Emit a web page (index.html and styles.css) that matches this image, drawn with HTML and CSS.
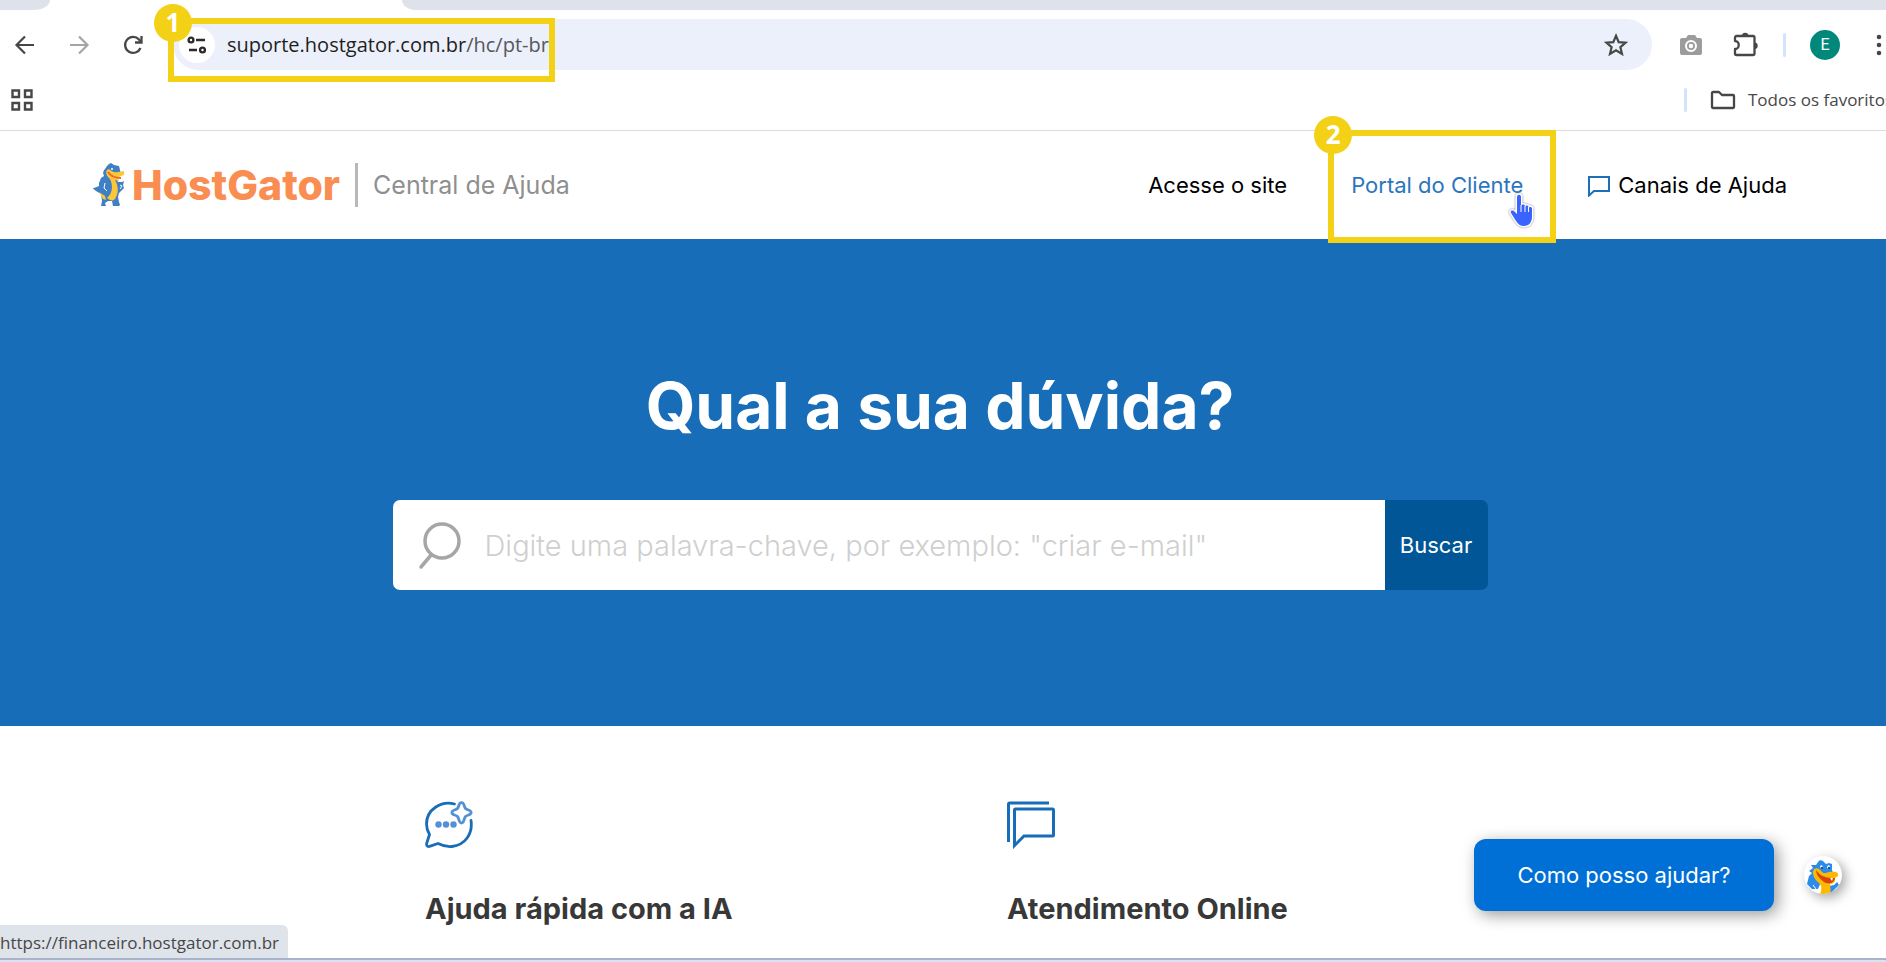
FILE: index.html
```html
<!DOCTYPE html>
<html lang="pt-BR">
<head>
<meta charset="utf-8">
<title>Central de Ajuda HostGator</title>
<meta name="viewport" content="width=device-width, initial-scale=1">
<link rel="stylesheet" href="styles.css">
</head>
<body>
<div class="browser">
  <div class="tabstrip">
    <div class="tab-left"></div>
    <div class="tab-active"></div>
    <div class="tab-rest"></div>
  </div>
  <div class="toolbar">
    <div class="nav-buttons">
      <button class="icon-btn" type="button" aria-label="Voltar">
        <svg width="24" height="24" viewBox="0 0 24 24" fill="none" stroke="#474747" stroke-width="2.2"><path d="M21 12H4M12 3.500 3.500 12l8.500 8.500"/></svg>
      </button>
      <button class="icon-btn" type="button" aria-label="Avançar">
        <svg width="24" height="24" viewBox="0 0 24 24" fill="none" stroke="#a5a5a5" stroke-width="2.200"><path d="M3 12h17M12 3.500l8.500 8.500-8.500 8.500"/></svg>
      </button>
      <button class="icon-btn" type="button" aria-label="Recarregar">
        <svg width="24" height="24" viewBox="0 0 24 24" fill="none" stroke="#474747" stroke-width="2.300"><path d="M19.500 15a8 8 0 1 1-1.500-8.500l2 2.500"/><path d="M20.500 3v6.500H14"/></svg>
      </button>
    </div>
    <div class="omnibox">
      <button class="site-info" type="button" aria-label="Informações do site">
        <svg width="20" height="20" viewBox="0 0 20 20" fill="none" stroke="#2b2b2b" stroke-width="2.400"><circle cx="4" cy="5" r="2.400"/><path d="M9 5h9M2 15h8"/><circle cx="15.500" cy="15" r="2.400"/></svg>
      </button>
      <span class="url"><span>suporte.hostgator.com.br</span><span class="url-path">/hc/pt-br</span></span>
      <button class="icon-btn" type="button" aria-label="Favoritar">
        <svg width="24" height="24" viewBox="0 0 24 24" fill="none" stroke="#474747" stroke-width="2.200"><path d="M12 2.800l2.700 6.300 6.900.6-5.200 4.500 1.600 6.700-6-3.600-6 3.600 1.600-6.700-5.200-4.500 6.900-.6z"/></svg>
      </button>
      <span class="mark mark-url"><span class="mark-num">1</span></span>
    </div>
    <div class="extensions">
      <button class="icon-btn" type="button" aria-label="Captura">
        <svg width="24" height="24" viewBox="0 0 24 24"><path fill="#9c9c9c" d="M3 5h4l2-3h7l2 3h3a2 2 0 0 1 2 2v13a2 2 0 0 1-2 2H3a2 2 0 0 1-2-2V7a2 2 0 0 1 2-2z"/><circle cx="12" cy="13" r="5" fill="none" stroke="#fff" stroke-width="2"/><circle cx="12" cy="13" r="2.200" fill="#fff"/></svg>
      </button>
      <button class="icon-btn" type="button" aria-label="Extensões">
        <svg width="28" height="28" viewBox="0 0 28 28"><path fill="none" stroke="#474747" stroke-width="2.300" stroke-linejoin="round" d="M5 5h17a1.500 1.500 0 0 1 1.500 1.500v16A1.500 1.500 0 0 1 22 24H5.500A1.500 1.500 0 0 1 4 22.500V18c5 0 5-8 0-8V6.500A1.500 1.500 0 0 1 5 5z"/><path fill="#474747" d="M11 5a3.200 3.200 0 0 1 6.400 0zM23.500 11.500a3.200 3.200 0 0 1 0 6.400z"/></svg>
      </button>
      <span class="separator"></span>
      <button class="profile" type="button" aria-label="Perfil">E</button>
      <button class="menu-btn" type="button" aria-label="Menu">
        <svg width="6" height="22" viewBox="0 0 6 22" fill="#474747"><circle cx="3" cy="3" r="2.300"/><circle cx="3" cy="11" r="2.300"/><circle cx="3" cy="19" r="2.300"/></svg>
      </button>
    </div>
  </div>
  <div class="bookmarks">
    <button class="icon-btn" type="button" aria-label="Apps">
      <svg width="22" height="22" viewBox="0 0 22 22" fill="none" stroke="#474747" stroke-width="2.400"><path d="M1.500 1.500h6.500v6.500h-6.500zM14 1.500h6.500v6.500H14zM1.500 14h6.500v6.500h-6.500zM14 14h6.500v6.500H14z"/></svg>
    </button>
    <div class="all-bookmarks">
      <span class="separator"></span>
      <button class="folder" type="button">
        <svg width="26" height="20" viewBox="0 0 26 20" fill="none" stroke="#474747" stroke-width="2.300" stroke-linejoin="round"><path d="M3 2h6l3 3h11a1 1 0 0 1 1 1v11a1 1 0 0 1-1 1H3a1 1 0 0 1-1-1V3a1 1 0 0 1 1-1z"/></svg>
        <span>Todos os favoritos</span>
      </button>
    </div>
  </div>
</div>

<div class="page">
  <header class="site-header">
    <a class="brand" href="#">
      <svg class="brand-gator" width="32" height="44" viewBox="0 0 32 44">
        <path fill="#3f7fc6" d="M14 3l2-2 2-1 3 2 5 1 1 4 1 4-6 2 3 6h4l2-1-1 4 1 3-5 5-1 4 1 5 1 3-1 1h-6l-1-5h-4l-3 2 1 3h-5l1-5-1-7-5-3-5-4 3 1 5-2v-3l2-5 3-2-1-3 1-3 1-1z"/>
        <path fill="#fbc638" d="M14 7l2-1c2 2 5 4 9 3l6-1v4l-6 2 1 4-4-1c3 5 4 12 1 17-1 3-3 4-6 3l-3-2c6-5 6-13 3-19-3-3-5-6-3-9z"/>
        <path fill="none" stroke="#ef6a2c" stroke-width="2" d="M15 9c3 5 7 6 13 6"/>
        <circle cx="19" cy="6" r="1" fill="#fff"/>
        <path fill="#fbc638" d="M6 29l6 4 1 4-3-1z"/>
        <path fill="none" stroke="#fff" stroke-width="1" d="M12 20l-1 5 3 3M27 22l2 1-2 3"/>
      </svg>
      <span class="brand-name">HostGator</span>
      <span class="brand-sep"></span>
      <span class="brand-sub">Central de Ajuda</span>
    </a>
    <nav class="site-nav">
      <a href="#">Acesse o site</a>
      <a class="active" href="#">Portal do Cliente
        <span class="mark mark-link"><span class="mark-num">2</span></span>
        <svg class="cursor" width="28" height="36" viewBox="0 0 28 36"><path fill="#3a62ff" stroke="#fff" stroke-width="3" stroke-linejoin="round" paint-order="stroke" d="M9 4c0-3 4-3 4 0v9c0-2 4-2 4 0v1c0-2 3.500-2 3.500 0v1.500c0-2 3.500-2 3.500 0V24c0 5-3 9-8 9-4 0-6-2-8-5L3 20c-1-2 1-3 3-2l3 3z"/><path stroke="#fff" stroke-width="1" d="M13 12v7M17 13v6M20.500 14v5"/></svg>
      </a>
      <a class="channels" href="#">
        <svg width="24" height="24" viewBox="0 0 24 24" fill="none" stroke="#1d70b8" stroke-width="2"><path d="M2 4h20v14H7l-5 4.500z"/></svg>
        <span>Canais de Ajuda</span>
      </a>
    </nav>
  </header>

  <section class="hero">
    <h1>Qual a sua dúvida?</h1>
    <form class="search" role="search">
      <label class="search-field">
        <svg width="46" height="50" viewBox="0 0 46 50" fill="none" stroke="#a6a6a6" stroke-width="3.500" stroke-linecap="round"><circle cx="26" cy="21" r="17"/><path d="M15.500 34.500 5 47"/></svg>
        <input type="search" aria-label="Buscar artigos" placeholder='Digite uma palavra-chave, por exemplo: "criar e-mail"'>
      </label>
      <button class="search-btn" type="button">Buscar</button>
    </form>
  </section>

  <section class="services">
    <article class="service">
      <svg width="48" height="48" viewBox="0 0 48 48" fill="none" stroke-width="2.800" stroke-linecap="round" stroke-linejoin="round"><path stroke="#176db7" d="M29.500 3C16-.5 1.500 8.500 1.500 23c0 4 1 7 3 10.500L1.800 42c-.6 2.800.5 3.900 2.700 3.400L13 42.500c5 2.500 9 3.500 14 3C40 44 48 33 46 19.500"/><path stroke="#5490d6" d="M34 4c1-3.300 4-3.300 5 0 1 3.500 1.500 4 4.500 5 3.500 1.200 3.500 4 0 5-3 1-3.500 1.500-4.500 5-1 4-4 4-5 0-1-3.500-1.500-4-4.500-5-3.500-1-3.500-3.800 0-5 3-1 3.500-1.500 4.500-5z"/><g fill="#5490d6"><circle cx="13.500" cy="23.500" r="3.200"/><circle cx="21" cy="23.500" r="3.200"/><circle cx="28.500" cy="23.500" r="3.200"/></g></svg>
      <h2>Ajuda rápida com a IA</h2>
    </article>
    <article class="service">
      <svg width="48" height="48" viewBox="0 0 48 48" fill="none" stroke="#176db7" stroke-width="3"><path d="M1.500 41V3a1 1 0 0 1 1-1H42"/><path d="M7.500 44.500V9a1 1 0 0 1 1-1h37a1 1 0 0 1 1 1v25a1 1 0 0 1-1 1H17z"/></svg>
      <h2>Atendimento Online</h2>
    </article>
  </section>
</div>

<div class="chat">
  <button class="chat-btn" type="button">Como posso ajudar?</button>
  <button class="chat-avatar" type="button" aria-label="Abrir chat">
    <svg width="38" height="38" viewBox="0 0 38 38"><path fill="#2b8cec" d="M12 9l2-3 2-2 3 1 3 3 3-1 3 1v6l1 3-9 2-6 14H8l-5-5 2-8 3-3-3-2 4-3-2-3z"/><path fill="#2b8cec" d="M25 30l5-1 3-3 2 3-8 8-3-2z"/><path fill="#fdb900" d="M10 13c4-2 6 1 8 3 4 3 6-1 10 0 4-1 7 1 6 4l-3 2c1 4-2 6-5 6l1 10H16c2-5 2-8-1-11-4-3-8-9-5-14z"/><path fill="#d8440c" d="M12 14c3 5 9 8 16 8h3c-1 5-6 7-11 4-4-3-8-7-8-12z"/><path fill="#fff" d="M26 22h3l-1 3zM16 10l2-1 1 3-2 1zM24 9l2 1-1 3-2-1z"/><circle cx="18" cy="12" r="1" fill="#123"/><circle cx="25" cy="12" r="1" fill="#123"/><path fill="none" stroke="#fff" stroke-width="1" d="M9 29l3 4"/></svg>
  </button>
</div>

<div class="status-bar">https://financeiro.hostgator.com.br</div>
<div class="window-edge"></div>
</body>
</html>
```

FILE: styles.css
```css
* { box-sizing: border-box; }

body {
  margin: 0;
  min-height: 100vh;
  overflow: hidden;
  position: relative;
  background: #fff;
  color: #000;
  font-family: Inter, "Open Sans", sans-serif;
}

button, input { font: inherit; color: inherit; }
button { border: 0; padding: 0; background: none; cursor: pointer; }
a { color: inherit; text-decoration: none; }
svg { display: block; flex: none; }

/* Browser chrome */
.browser {
  font-family: "Open Sans", "Noto Sans", sans-serif;
  border-bottom: 1px solid #dcdcdc;
}

.tabstrip {
  display: flex;
  height: 10px;
  background: #fff;
}
.tab-left {
  width: 50px;
  background: #dee2ea;
  border-bottom-right-radius: 16px 10px;
}
.tab-active { width: 352px; }
.tab-rest {
  flex: 1;
  background: #dee2ea;
  border-bottom-left-radius: 14px 10px;
}

.toolbar {
  display: flex;
  align-items: center;
  height: 69px;
}
.nav-buttons {
  display: flex;
  gap: 30px;
  padding: 0 28px 0 13px;
}
.icon-btn { display: flex; align-items: center; }

.omnibox {
  position: relative;
  flex: 1;
  display: flex;
  align-items: center;
  height: 51px;
  padding: 0 24px 0 6px;
  border-radius: 26px;
  background: #ecf0fa;
}
.site-info {
  display: flex;
  align-items: center;
  justify-content: center;
  width: 36px;
  height: 36px;
  border-radius: 50%;
  background: #fff;
}
.url {
  flex: 1;
  padding-left: 12px;
  font-size: 20px;
  line-height: 28px;
  color: #1f1f1f;
}
.url-path { color: #55585e; }

.extensions {
  display: flex;
  align-items: center;
  padding-left: 27px;
  gap: 24px;
}
.extensions .icon-btn:first-child { margin-right: 4px; }
.separator {
  flex: none;
  width: 3px;
  height: 24px;
  border-radius: 2px;
  background: #d3e3fd;
}
.profile {
  width: 30px;
  height: 30px;
  border-radius: 50%;
  background: #00897b;
  color: #fff;
  font-family: Roboto, sans-serif;
  font-size: 16px;
}
.menu-btn { padding: 0 4px 0 12px; }

.bookmarks {
  display: flex;
  align-items: center;
  justify-content: space-between;
  height: 51px;
  padding: 0 0 10px 11px;
}
.all-bookmarks {
  display: flex;
  align-items: center;
  gap: 23px;
  width: 202px;
  white-space: nowrap;
}
.folder {
  display: flex;
  align-items: center;
  gap: 12px;
  font-size: 17px;
  line-height: 24px;
  color: #474747;
}

/* Numbered callouts */
.mark {
  position: absolute;
  border: 6px solid #f3d117;
  pointer-events: none;
  z-index: 2;
}
.mark-num {
  position: absolute;
  top: -20px;
  left: -20px;
  width: 38px;
  height: 38px;
  border-radius: 50%;
  background: #f3d117;
  color: #fff;
  font: bold 26px/36px "Open Sans", sans-serif;
  text-align: center;
}
.mark-url { left: -5px; top: -1px; width: 387px; height: 64px; }
.mark-link { left: -23px; top: -41px; width: 228px; height: 113px; }

/* Site header */
.site-header {
  display: flex;
  align-items: center;
  justify-content: space-between;
  height: 108px;
  padding: 0 99px 0 93px;
}
.brand { display: flex; align-items: center; }
.brand-name {
  padding-left: 7px;
  font-size: 41px;
  font-weight: 800;
  line-height: 48px;
  color: #f98d52;
}
.brand-sep {
  width: 3px;
  height: 44px;
  margin: 0 15px;
  background: #b8b8b8;
}
.brand-sub {
  font-size: 25px;
  line-height: 32px;
  color: #8f8f8f;
}
.site-nav {
  display: flex;
  align-items: center;
  gap: 64px;
  font-size: 22px;
  line-height: 28px;
}
.site-nav a { position: relative; white-space: nowrap; }
.site-nav .active { color: #2b76bd; }
.site-nav .channels { display: flex; align-items: center; gap: 7px; }
.cursor {
  position: absolute;
  left: 157px;
  top: 22px;
  z-index: 3;
  filter: drop-shadow(0 0 1px #888);
}

/* Hero */
.hero {
  display: flex;
  flex-direction: column;
  align-items: center;
  padding: 131px 6px 136px 0;
  background: #176db7;
}
.hero h1 {
  margin: 0 0 58px;
  font-size: 64px;
  font-weight: 700;
  line-height: 72px;
  color: #fff;
}
.search {
  display: flex;
  width: 100%;
  max-width: 1095px;
  height: 90px;
  border-radius: 7px;
  overflow: hidden;
}
.search-field {
  flex: 1;
  display: flex;
  align-items: center;
  padding-left: 23px;
  background: #fff;
}
.search-field input {
  flex: 1;
  border: 0;
  outline: 0;
  padding: 0 0 0 23px;
  background: none;
  font-size: 29px;
  font-weight: 300;
}
.search-field input::placeholder { color: #cfcfcf; opacity: 1; }
.search-btn {
  width: 103px;
  background: #005696;
  color: #fff;
  font-size: 22px;
}

/* Services */
.services {
  display: grid;
  grid-template-columns: 1fr 1fr;
  width: calc(100% - 6px);
  max-width: 1880px;
  padding: 75px 358px 0;
}
.service { padding-left: 67px; }
.service h2 {
  margin: 42px 0 0;
  font-size: 29px;
  font-weight: 700;
  line-height: 36px;
  color: #383838;
}

/* Floating chat */
.chat {
  position: absolute;
  right: 44px;
  bottom: 51px;
  display: flex;
  align-items: center;
  gap: 30px;
}
.chat-btn {
  width: 300px;
  height: 72px;
  border-radius: 12px;
  background: #0070d6;
  color: #fff;
  font-size: 22px;
  box-shadow: 4px 4px 16px rgba(0, 0, 0, 0.4);
}
.chat-avatar {
  width: 38px;
  height: 38px;
  border-radius: 50%;
  background: #fff;
  overflow: hidden;
  box-shadow: 4px 4px 12px rgba(0, 0, 0, 0.35);
}

/* Window bottom */
.status-bar {
  position: absolute;
  left: 0;
  bottom: 4px;
  width: 288px;
  height: 33px;
  border-top-right-radius: 6px;
  background: #dfe3ea;
  color: #474747;
  font: 17px/35px "Open Sans", "Noto Sans", sans-serif;
}
.window-edge {
  position: absolute;
  left: 0;
  right: 0;
  bottom: 0;
  height: 4px;
  border-top: 2px solid #aab4c8;
  background: #d9e2f4;
}
```
